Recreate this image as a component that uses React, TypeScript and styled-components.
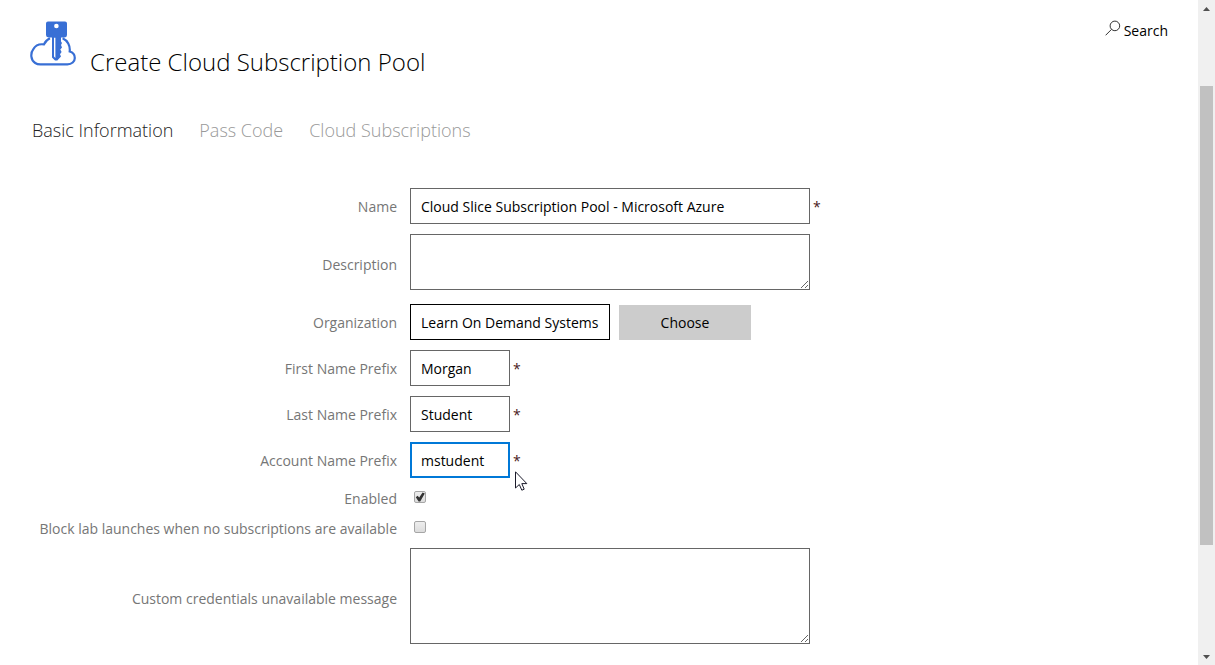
import React, { useState } from "react";
import styled, { createGlobalStyle } from "styled-components";

const GlobalStyle = createGlobalStyle`
  * { box-sizing: border-box; }
  body {
    margin: 0;
    background: #fff;
    color: #000;
    font: 14px/20px "Open Sans", "Noto Sans", sans-serif;
  }
  input, textarea, button { font: inherit; color: inherit; }
`;

const Shell = styled.div`
  display: grid;
  grid-template-columns: minmax(0, 1fr) 17px;
  height: 100vh;
  overflow: hidden;
`;

const Page = styled.main`
  overflow: hidden;
  padding: 20px 30px 0;
`;

const Header = styled.header`
  display: flex;
  align-items: flex-start;
  justify-content: space-between;
  height: 60px;
`;

const Brand = styled.div`
  display: flex;
  gap: 14px;
`;

const Title = styled.h1`
  margin: 24px 0 0;
  font-size: 24px;
  line-height: 36px;
  font-weight: 300;
`;

const SearchLink = styled.a`
  display: flex;
  align-items: flex-start;
  gap: 3px;
  line-height: 22px;
  color: #000;
  text-decoration: none;
`;

const Tabs = styled.nav`
  display: flex;
  gap: 26px;
  margin: 35px 0 43px;
  padding: 0 2px;
`;

const Tab = styled.a<{ $active?: boolean }>`
  font-size: 18px;
  line-height: 30px;
  font-weight: 300;
  color: ${(p) => (p.$active ? "#222" : "#999")};
  text-decoration: none;
`;

const Form = styled.form`
  display: flex;
  flex-direction: column;
  gap: 10px;
`;

const Row = styled.div`
  display: grid;
  grid-template-columns: 367px minmax(0, 1fr);
  column-gap: 13px;
  align-items: center;
`;

const Label = styled.label`
  padding-top: 2px;
  line-height: 18px;
  text-align: right;
  color: #767676;
`;

const Field = styled.div<{ $gap?: number }>`
  display: flex;
  align-items: flex-start;
  gap: ${(p) => p.$gap ?? 3}px;
`;

const TextInput = styled.input<{ $width: number; $strong?: boolean }>`
  width: ${(p) => p.$width}px;
  height: 36px;
  padding: 0 10px;
  border: 1px solid ${(p) => (p.$strong ? "#000" : "#666")};
  border-radius: 0;
  background: #fff;
  outline: none;

  &[data-current="true"] {
    padding: 0 9px;
    border: 2px solid #0078d7;
  }
`;

const TextArea = styled.textarea<{ $height: number }>`
  width: 400px;
  height: ${(p) => p.$height}px;
  margin-bottom: 4px;
  padding: 7px 10px;
  border: 1px solid #666;
  border-radius: 0;
  resize: both;
  outline: none;
`;

const Required = styled.span`
  padding-top: 2px;
  line-height: 34px;
  color: #4a2020;
`;

const ChooseButton = styled.button`
  width: 132px;
  height: 35px;
  margin-top: 1px;
  padding: 0;
  border: 0;
  background: #ccc;
`;

const CheckField = styled.div`
  display: flex;
  height: 20px;
  padding: 3px 4px;
`;

const Checkbox = styled.input`
  appearance: none;
  display: grid;
  width: 12px;
  height: 12px;
  margin: 0;
  border: 1px solid #a6a6a6;
  border-radius: 2px;
  background: linear-gradient(#eee, #dcdcdc);

  &:checked::before {
    content: "";
    background: #333;
    clip-path: polygon(8% 52%, 26% 38%, 42% 56%, 76% 4%, 98% 16%, 52% 94%, 36% 94%);
  }
`;

const Scrollbar = styled.div`
  display: flex;
  flex-direction: column;
  align-items: center;
  background: #f0f0f0;
`;

const ScrollArrow = styled.div`
  display: flex;
  flex: 0 0 17px;
  align-items: center;
`;

const ScrollTrack = styled.div`
  display: grid;
  flex: 1;
  width: 13px;
  grid-template-rows: 69fr 459fr 103fr;
`;

const ScrollThumb = styled.div`
  grid-row: 2;
  background: #c1c1c1;
`;

const Pointer = styled.svg`
  position: absolute;
  left: 105px;
  top: 29px;
  pointer-events: none;
`;

const PointerField = styled(Field)`
  position: relative;
`;

const CloudKeyLogo = () => (
  <svg width="46" height="48" viewBox="0 0 46 48" aria-hidden="true">
    <path
      d="M20 18.3C17.5 19.4 15.2 21.5 14 24.4C9 23.7 5.2 25.9 3.5 28.9C0 33.4.8 40 5.2 43C6.8 44.1 8.5 44.4 10.4 44.4H37.4C41.7 44.4 44.8 41.6 44.8 37.9C44.8 34.7 42.8 32.3 39.7 31.5C40.4 25.6 37.5 20.3 32.6 18.2"
      fill="none"
      stroke="#386fd5"
      strokeWidth="2.2"
    />
    <path
      fillRule="evenodd"
      fill="#386fd5"
      d="M18 1.4H35Q37 1.4 37 3.4V15Q37 17.4 34.8 17.4H31V21.5L32 23L31 25L32 27.5L30.3 29.5L31.6 32L30 34.2L31 36.5L27.3 40.4H25L22 37.6V17.4H18.4Q16 17.4 16 15V3.4Q16 1.4 18 1.4ZM26.4 3.7A2.3 2.3 0 1 0 26.4 8.3A2.3 2.3 0 1 0 26.4 3.7ZM24 17.8V36.6L25.4 38V17.8Z"
    />
  </svg>
);

const SearchIcon = () => (
  <svg width="16" height="16" viewBox="0 0 16 16" aria-hidden="true">
    <circle cx="9.9" cy="5.9" r="4.8" fill="none" stroke="#333" />
    <path d="M6.6 9.3L.6 15.3" stroke="#333" />
  </svg>
);

type TextRowProps = {
  id: string;
  label: string;
  value: string;
  width: number;
  current?: boolean;
};

const TextRow = ({ id, label, value, width, current }: TextRowProps) => {
  const [text, setText] = useState(value);
  return (
    <Row>
      <Label htmlFor={id}>{label}</Label>
      <PointerField>
        <TextInput
          id={id}
          $width={width}
          value={text}
          data-current={current}
          onChange={(e) => setText(e.target.value)}
        />
        <Required>*</Required>
        {current && (
          <Pointer width="13" height="21" viewBox="0 0 13 21" aria-hidden="true">
            <path
              d="M.5 .8V17L4.3 13.5L6.8 19.2L9.2 18.2L6.8 12.6H11.8Z"
              fill="#fff"
              stroke="#1b1b2b"
            />
          </Pointer>
        )}
      </PointerField>
    </Row>
  );
};

const AreaRow = ({ id, label, height }: { id: string; label: string; height: number }) => (
  <Row>
    <Label htmlFor={id}>{label}</Label>
    <Field>
      <TextArea id={id} $height={height} />
    </Field>
  </Row>
);

const CheckRow = ({ id, label, checked }: { id: string; label: string; checked?: boolean }) => (
  <Row>
    <Label htmlFor={id}>{label}</Label>
    <CheckField>
      <Checkbox id={id} type="checkbox" defaultChecked={checked} />
    </CheckField>
  </Row>
);

export default function App() {
  return (
    <>
      <GlobalStyle />
      <Shell>
        <Page>
          <Header>
            <Brand>
              <CloudKeyLogo />
              <Title>Create Cloud Subscription Pool</Title>
            </Brand>
            <SearchLink href="#search">
              <SearchIcon />
              Search
            </SearchLink>
          </Header>
          <Tabs>
            <Tab href="#basic" $active>Basic Information</Tab>
            <Tab href="#passcode">Pass Code</Tab>
            <Tab href="#subscriptions">Cloud Subscriptions</Tab>
          </Tabs>
          <Form onSubmit={(e) => e.preventDefault()}>
            <TextRow id="name" label="Name" value="Cloud Slice Subscription Pool - Microsoft Azure" width={400} />
            <AreaRow id="description" label="Description" height={56} />
            <Row>
              <Label htmlFor="organization">Organization</Label>
              <Field $gap={9}>
                <TextInput id="organization" $width={200} $strong defaultValue="Learn On Demand Systems" />
                <ChooseButton type="button">Choose</ChooseButton>
              </Field>
            </Row>
            <TextRow id="first" label="First Name Prefix" value="Morgan" width={100} />
            <TextRow id="last" label="Last Name Prefix" value="Student" width={100} />
            <TextRow id="account" label="Account Name Prefix" value="mstudent" width={100} current />
            <CheckRow id="enabled" label="Enabled" checked />
            <CheckRow id="block" label="Block lab launches when no subscriptions are available" />
            <AreaRow id="message" label="Custom credentials unavailable message" height={96} />
          </Form>
        </Page>
        <Scrollbar aria-hidden="true">
          <ScrollArrow>
            <svg width="7" height="4" viewBox="0 0 7 4"><path d="M3.5 0L7 4H0Z" fill="#505050" /></svg>
          </ScrollArrow>
          <ScrollTrack>
            <ScrollThumb />
          </ScrollTrack>
          <ScrollArrow>
            <svg width="7" height="4" viewBox="0 0 7 4"><path d="M3.5 4L7 0H0Z" fill="#505050" /></svg>
          </ScrollArrow>
        </Scrollbar>
      </Shell>
    </>
  );
}
